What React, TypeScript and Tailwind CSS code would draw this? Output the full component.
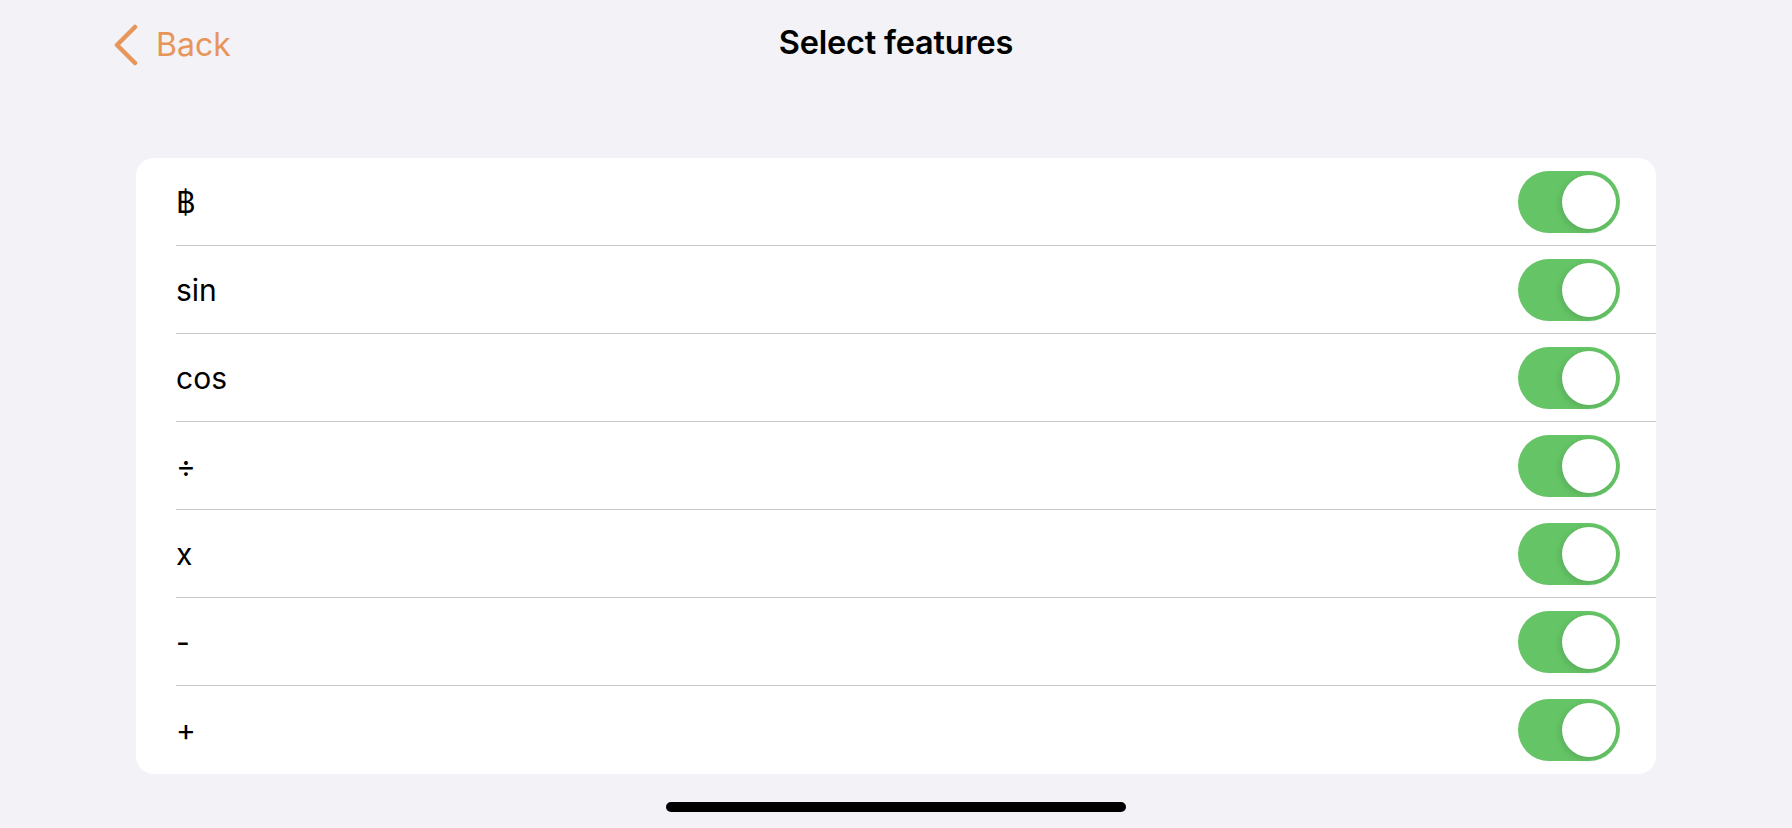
import { useState } from "react";

const FEATURES = ["฿", "sin", "cos", "÷", "x", "-", "+"];

function Toggle({ on, onChange }: { on: boolean; onChange: () => void }) {
  return (
    <button
      onClick={onChange}
      className={`relative flex h-[62px] w-[102px] shrink-0 items-center rounded-full p-[4px] transition-colors ${
        on ? "justify-end bg-[#65c466]" : "justify-start bg-[#e9e9eb]"
      }`}
    >
      <span className="block h-[54px] w-[54px] rounded-full bg-white shadow-[-2px_2px_6px_rgba(0,0,0,0.12)]" />
    </button>
  );
}

export default function App() {
  const [enabled, setEnabled] = useState<boolean[]>(FEATURES.map(() => true));

  const toggle = (i: number) =>
    setEnabled((prev) => prev.map((v, j) => (j === i ? !v : v)));

  return (
    <div
      className="flex h-[828px] w-full flex-col bg-[#f2f2f7] text-black"
      style={{ fontFamily: "Inter, 'Noto Sans', sans-serif" }}
    >
      {/* nav bar */}
      <div className="relative flex h-[88px] items-center justify-center pb-[2px]">
        <button className="absolute left-[113px] top-[24px] flex items-center gap-[17px] text-[#e8955a]">
          <svg width="26" height="42" viewBox="0 0 26 42" fill="none">
            <path
              d="M22 3 L4 21 L22 39"
              stroke="currentColor"
              strokeWidth="4.5"
              strokeLinecap="round"
              strokeLinejoin="round"
            />
          </svg>
          <span className="text-[32px] leading-none">Back</span>
        </button>
        <h1 className="text-[32.5px] font-semibold leading-none tracking-[-0.2px]">
          Select features
        </h1>
      </div>

      {/* list */}
      <div className="mx-[136px] mt-[70px] overflow-hidden rounded-[18px] bg-white">
        {FEATURES.map((label, i) => (
          <div key={label} className="pl-[40px]">
            <div
              className={`flex h-[88px] items-center justify-between pr-[36px] ${
                i < FEATURES.length - 1 ? "border-b border-[#c8c8cc]" : "h-[87px]"
              }`}
            >
              <span className="text-[30px] leading-none">{label}</span>
              <Toggle on={enabled[i]} onChange={() => toggle(i)} />
            </div>
          </div>
        ))}
      </div>

      {/* home indicator */}
      <div className="mt-auto flex justify-center pb-[16px]">
        <div className="h-[10px] w-[460px] rounded-full bg-black" />
      </div>
    </div>
  );
}
